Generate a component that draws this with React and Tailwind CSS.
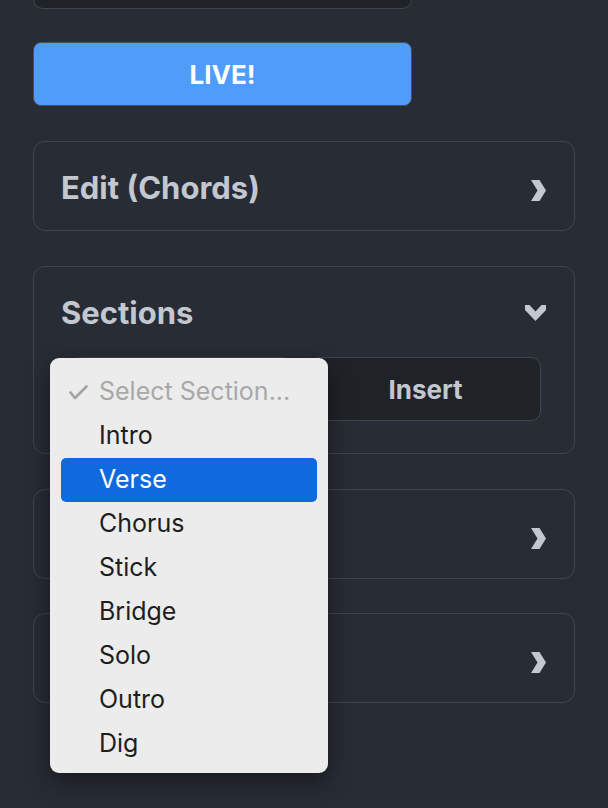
import React from 'react'

const font = { fontFamily: 'Inter, "Noto Sans", sans-serif' }

function ChevronRight() {
  return (
    <svg width="15" height="21" viewBox="0 0 15 21" className="shrink-0 text-[#c3c8d0] mr-[1px] mt-[4px]">
      <polygon points="0,0 8.5,0 15,10.5 8.5,21 0,21 6.5,10.5" fill="currentColor" />
    </svg>
  )
}

function ChevronDown() {
  return (
    <svg width="21" height="16" viewBox="0 0 21 16" className="shrink-0 text-[#c3c8d0] mr-[1px]">
      <polygon points="0,0 4.5,0 10.5,6.5 16.5,0 21,0 21,5 10.5,16 0,5" fill="currentColor" />
    </svg>
  )
}

function Check() {
  return (
    <svg width="19" height="15" viewBox="0 0 19 15">
      <polyline points="1.5,7.5 6,13 17.5,1.5" fill="none" stroke="#a3a3a3" strokeWidth="2.6" strokeLinecap="round" strokeLinejoin="round" />
    </svg>
  )
}

function Card({ title }) {
  return (
    <div className="rounded-[12px] border border-[#41454e] px-[27px] pt-[30px] pb-[26px]">
      <div className="flex items-center justify-between h-[32px]">
        <span className="text-[31px] font-bold text-[#c3c8d0] leading-[32px]">{title}</span>
        <ChevronRight />
      </div>
    </div>
  )
}

const items = ['Intro', 'Verse', 'Chorus', 'Stick', 'Bridge', 'Solo', 'Outro', 'Dig']

export default function App() {
  return (
    <div className="min-h-screen bg-[#282c34] overflow-hidden" style={font}>
      <div className="pl-[33px] w-[575px] flex flex-col">
        <div className="-mt-[40px] h-[49px] w-[379px] rounded-[10px] border border-[#41454e] bg-[#1f2227]" />

        <button className="mt-[33px] h-[64px] w-[379px] rounded-[8px] border border-[#4a4f58] bg-[#4f9dfa] text-white text-[26px] font-bold">
          LIVE!
        </button>

        <div className="mt-[35px]">
          <Card title="Edit (Chords)" />
        </div>

        <div className="mt-[35px] relative">
          <div className="rounded-[12px] border border-[#41454e] pl-[27px] pr-[27px] pt-[30px] pb-[32px]">
            <div className="flex items-center justify-between h-[32px]">
              <span className="text-[31px] font-bold text-[#c3c8d0] leading-[32px]">Sections</span>
              <ChevronDown />
            </div>
            <div className="mt-[28px] flex gap-[17px] pl-[10px] pr-[6px]">
              <div className="h-[64px] w-[222px] rounded-[10px] border border-[#41454e] bg-[#1f2227]" />
              <button className="h-[64px] flex-1 rounded-[10px] border border-[#41454e] bg-[#1f2227] text-[26px] font-bold text-[#c3c8d0]">
                Insert
              </button>
            </div>
          </div>

          <div className="absolute left-[17px] top-[92px] w-[278px] rounded-[9px] bg-[#ececec] pt-[12px] pb-[7px] px-[11px] shadow-[0_8px_24px_rgba(0,0,0,0.45)] z-10">
            <div className="h-[44px] flex items-center text-[25px] text-[#a8a8a8] whitespace-nowrap">
              <span className="w-[38px] pl-[8px] flex items-center"><Check /></span>
              <span>Select Section...</span>
            </div>
            {items.map((it) => (
              <div
                key={it}
                className={
                  it === 'Verse'
                    ? 'h-[44px] flex items-center pl-[38px] rounded-[5px] bg-[#1069dd] text-white text-[25px]'
                    : 'h-[44px] flex items-center pl-[38px] text-[#1e1e1e] text-[25px]'
                }
              >
                {it}
              </div>
            ))}
          </div>
        </div>

        <div className="mt-[35px]">
          <Card title="" />
        </div>

        <div className="mt-[34px]">
          <Card title="" />
        </div>
      </div>
    </div>
  )
}
